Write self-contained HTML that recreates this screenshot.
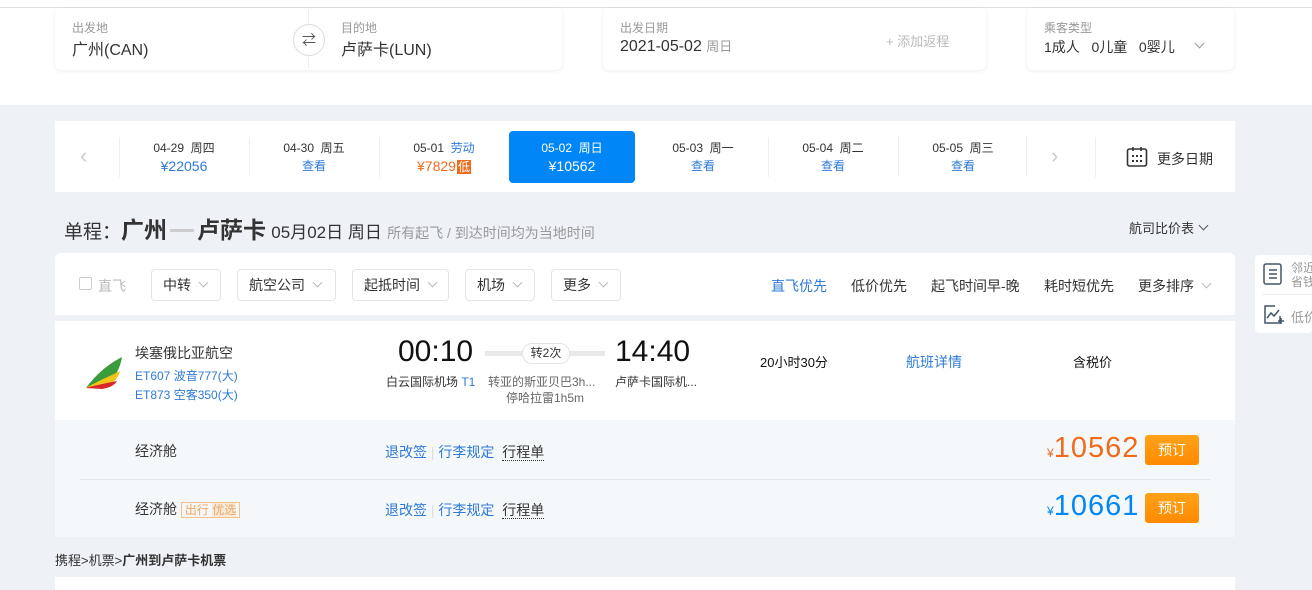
<!DOCTYPE html>
<html><head><meta charset="utf-8"><style>
*{margin:0;padding:0;box-sizing:border-box}
body{width:1312px;height:590px;overflow:hidden;background:#eef1f5;font-family:"Liberation Sans","Noto Sans CJK SC",sans-serif;color:#333;position:relative;font-size:13px}
.a{position:absolute;white-space:nowrap}
.card{position:absolute;background:#fff;border-radius:6px;box-shadow:0 1px 4px rgba(0,0,0,.08)}
.lbl{font-size:12px;color:#999}
.val{font-size:16px;color:#333}
.blue{color:#2e7ad6}
.dt{position:absolute;top:131px;width:126px;height:52px;text-align:center;font-size:12px;line-height:18px;padding-top:8px}
.sep{position:absolute;top:137px;width:1px;height:40px;background:#eee}
.fb{position:absolute;top:269px;height:32px;border:1px solid #e4e4e4;border-radius:4px;font-size:14px;line-height:30px;padding-left:11px;color:#333}
.chev{display:inline-block;width:7px;height:7px;border-right:1.5px solid #bbb;border-bottom:1.5px solid #bbb;transform:rotate(45deg);margin-left:9px;vertical-align:4px}
.btn{position:absolute;width:54px;height:30px;background:linear-gradient(#ffa31a,#ff8a00);color:#fff;font-size:14px;text-align:center;line-height:30px;border-radius:3px}
</style></head><body>
<div class="a" style="left:0;top:7px;width:1312px;height:98px;background:#fff;border-top:1px solid #e0e0e0"></div>
<div class="a" style="left:0;top:0;width:1312px;height:7px;background:#fff"></div>
<div class="card" style="left:55px;top:8px;width:507px;height:62px"></div>
<div class="a" style="left:308px;top:10px;width:1px;height:58px;background:#eee"></div>
<div class="a" style="left:293px;top:24px;width:32px;height:32px;border-radius:50%;border:1px solid #ddd;background:#fff;text-align:center;line-height:30px;font-size:14px;color:#555">⇄</div>
<div class="a lbl" style="left:72px;top:19px">出发地</div>
<div class="a val" style="left:72px;top:36px">广州(CAN)</div>
<div class="a lbl" style="left:341px;top:19px">目的地</div>
<div class="a val" style="left:341px;top:36px">卢萨卡(LUN)</div>
<div class="card" style="left:603px;top:8px;width:383px;height:62px"></div>
<div class="a lbl" style="left:620px;top:19px">出发日期</div>
<div class="a val" style="left:620px;top:36px">2021-05-02 <span style="font-size:13px;color:#999">周日</span></div>
<div class="a" style="left:886px;top:31px;color:#bbb;font-size:13px">+ 添加返程</div>
<div class="card" style="left:1027px;top:8px;width:207px;height:62px"></div>
<div class="a lbl" style="left:1044px;top:19px">乘客类型</div>
<div class="a" style="left:1044px;top:37px;font-size:14px">1成人&nbsp;&nbsp; 0儿童&nbsp;&nbsp; 0婴儿</div>
<div class="a" style="left:1196px;top:39px"><span class="chev" style="margin:0;border-color:#999"></span></div>

<div class="a" style="left:55px;top:121px;width:1180px;height:71px;background:#fff"></div>
<div class="a" style="left:80px;top:143px;font-size:22px;color:#ccc">‹</div>
<div class="sep" style="left:119px"></div>
<div class="dt" style="left:119px;width:130px">04-29&nbsp; 周四<br><span class="blue" style="font-size:14px">¥22056</span></div>
<div class="sep" style="left:249px"></div>
<div class="dt" style="left:249px;width:130px">04-30&nbsp; 周五<br><span class="blue">查看</span></div>
<div class="sep" style="left:379px"></div>
<div class="dt" style="left:379px;width:130px">05-01&nbsp; <span class="blue">劳动</span><br><span style="color:#f06a1c;font-size:14px">¥7829<span style="background:#f06a1c;color:#fff;font-size:12px;padding:0 1px;margin-left:1px">低</span></span></div>
<div class="dt" style="left:509px;background:#0086f6;color:#fff;border-radius:4px">05-02&nbsp; 周日<br><span style="font-size:14px">¥10562</span></div>
<div class="dt" style="left:638px;width:130px">05-03&nbsp; 周一<br><span class="blue">查看</span></div>
<div class="sep" style="left:768px"></div>
<div class="dt" style="left:768px;width:130px">05-04&nbsp; 周二<br><span class="blue">查看</span></div>
<div class="sep" style="left:898px"></div>
<div class="dt" style="left:898px;width:130px">05-05&nbsp; 周三<br><span class="blue">查看</span></div>
<div class="sep" style="left:1026px"></div>
<div class="a" style="left:1051px;top:143px;font-size:22px;color:#ccc">›</div>
<div class="sep" style="left:1095px"></div>
<svg class="a" style="left:1126px;top:146px" width="22" height="22" viewBox="0 0 22 22"><rect x="1.5" y="3" width="19" height="17" rx="2" fill="none" stroke="#333" stroke-width="1.6"/><path d="M7 1v4M15 1v4" stroke="#333" stroke-width="1.6"/><g fill="#333"><rect x="6" y="9" width="2" height="2"/><rect x="10" y="9" width="2" height="2"/><rect x="14" y="9" width="2" height="2"/><rect x="6" y="14" width="2" height="2"/><rect x="10" y="14" width="2" height="2"/><rect x="14" y="14" width="2" height="2"/></g></svg>
<div class="a" style="left:1157px;top:149px;font-size:14px;color:#333">更多日期</div>

<div class="a" style="left:64px;top:211px;font-size:19px;color:#333">单程：<b style="font-size:23px">广州</b><span style="display:inline-block;width:24px;height:3px;background:#ccc;margin:0 3px;vertical-align:6px"></span><b style="font-size:23px">卢萨卡</b> <span style="font-size:17px">05月02日 周日</span> <span style="font-size:14px;color:#999">所有起飞 / 到达时间均为当地时间</span></div>
<div class="a" style="left:1129px;top:218px;font-size:13px">航司比价表 <span class="chev" style="margin-left:2px;border-color:#555"></span></div>

<div class="a" style="left:55px;top:253px;width:1180px;height:62px;background:#fff;border-radius:6px 6px 0 0"></div>
<div class="a" style="left:79px;top:277px;width:13px;height:13px;border:1px solid #ccc;border-radius:2px"></div>
<div class="a" style="left:98px;top:276px;font-size:14px;color:#bbb">直飞</div>
<div class="fb" style="left:151px;width:70px">中转<span class="chev"></span></div>
<div class="fb" style="left:237px;width:99px">航空公司<span class="chev"></span></div>
<div class="fb" style="left:352px;width:97px">起抵时间<span class="chev"></span></div>
<div class="fb" style="left:465px;width:70px">机场<span class="chev"></span></div>
<div class="fb" style="left:551px;width:70px">更多<span class="chev"></span></div>
<div class="a" style="left:771px;top:276px;font-size:14px;color:#2e7ad6">直飞优先</div>
<div class="a" style="left:851px;top:276px;font-size:14px">低价优先</div>
<div class="a" style="left:931px;top:276px;font-size:14px">起飞时间早-晚</div>
<div class="a" style="left:1044px;top:276px;font-size:14px">耗时短优先</div>
<div class="a" style="left:1138px;top:276px;font-size:14px">更多排序<span class="chev"></span></div>

<div class="a" style="left:1255px;top:255px;width:57px;height:78px;background:#fff;border-radius:4px"></div>
<svg class="a" style="left:1263px;top:263px" width="20" height="22" viewBox="0 0 20 22"><rect x="1" y="1" width="17" height="20" rx="2" fill="none" stroke="#456" stroke-width="1.5"/><path d="M6 7h8M6 11h8M6 15h8" stroke="#456" stroke-width="1.5"/></svg>
<div class="a" style="left:1291px;top:261px;font-size:12px;color:#999;line-height:14px">邻近<br>省钱</div>
<div class="a" style="left:1262px;top:294px;width:50px;height:1px;background:#eee"></div>
<svg class="a" style="left:1263px;top:305px" width="22" height="20" viewBox="0 0 22 20"><path d="M12 1H2v17h15v-7" fill="none" stroke="#456" stroke-width="1.5"/><path d="M4 13l4-5 3 3 5-6" fill="none" stroke="#456" stroke-width="1.5"/><path d="M18 13v6M15 16h6" stroke="#456" stroke-width="1.5"/></svg>
<div class="a" style="left:1291px;top:307px;font-size:13px;color:#999">低价</div>

<div class="a" style="left:55px;top:321px;width:1180px;height:216px;background:#f5f8fb"></div>
<div class="a" style="left:55px;top:321px;width:1180px;height:99px;background:#fff"></div>
<svg class="a" style="left:84px;top:355px" width="40" height="36" viewBox="0 0 40 36"><path d="M2 33C10 22 22 10 38 2C36 14 30 26 18 33Z" fill="#3a9c3c"/><path d="M2 33C12 27 24 22 36 16C34 24 28 30 18 33Z" fill="#f0c419"/><path d="M2 33C12 30 24 28 33 26C31 30 25 33 18 34Z" fill="#d7262c"/></svg>
<div class="a" style="left:135px;top:343px;font-size:14px">埃塞俄比亚航空</div>
<div class="a blue" style="left:135px;top:367px;font-size:12px">ET607 波音777(大)</div>
<div class="a blue" style="left:135px;top:386px;font-size:12px">ET873 空客350(大)</div>
<div class="a" style="left:398px;top:335px;font-size:30px;color:#111">00:10</div>
<div class="a" style="left:386px;top:373px;font-size:12px">白云国际机场 <span class="blue">T1</span></div>
<div class="a" style="left:485px;top:351px;width:120px;height:5px;background:#e8e8e8"></div>
<div class="a" style="left:522px;top:343px;width:48px;height:21px;border-radius:10px;background:#fff;border:1px solid #e4e4e4;font-size:12px;text-align:center;line-height:19px">转2次</div>
<div class="a" style="left:488px;top:373px;font-size:12px;color:#666">转亚的斯亚贝巴3h...</div>
<div class="a" style="left:506px;top:389px;font-size:12px;color:#666">停哈拉雷1h5m</div>
<div class="a" style="left:615px;top:335px;font-size:30px;color:#111">14:40</div>
<div class="a" style="left:615px;top:373px;font-size:12px">卢萨卡国际机...</div>
<div class="a" style="left:760px;top:352px;font-size:13px;color:#111">20小时30分</div>
<div class="a" style="left:906px;top:352px;font-size:14px;color:#2e7ad6">航班详情</div>
<div class="a" style="left:1073px;top:352px;font-size:13px;color:#111">含税价</div>

<div class="a" style="left:135px;top:441px;font-size:14px">经济舱</div>
<div class="a" style="left:385px;top:442px;font-size:14px"><span class="blue">退改签</span> <span style="color:#ddd">|</span> <span class="blue">行李规定</span>&nbsp; <span style="border-bottom:1px dotted #333">行程单</span></div>
<div class="a" style="left:1047px;top:432px;color:#f06a1c"><span style="font-size:12px">¥</span><span style="font-size:29px;letter-spacing:1px">10562</span></div>
<div class="btn" style="left:1145px;top:435px">预订</div>
<div class="a" style="left:80px;top:479px;width:1130px;height:1px;background:#e4e4e4"></div>
<div class="a" style="left:135px;top:499px;font-size:14px">经济舱 <span style="font-size:12px;border:1px solid #f5c08a;padding:0 3px;color:#f5a55a">出行 <span style="background:#fbe9d6;color:#e8a66a">优选</span></span></div>
<div class="a" style="left:385px;top:500px;font-size:14px"><span class="blue">退改签</span> <span style="color:#ddd">|</span> <span class="blue">行李规定</span>&nbsp; <span style="border-bottom:1px dotted #333">行程单</span></div>
<div class="a" style="left:1047px;top:490px;color:#0086f6"><span style="font-size:12px">¥</span><span style="font-size:29px;letter-spacing:1px">10661</span></div>
<div class="btn" style="left:1145px;top:493px">预订</div>

<div class="a" style="left:55px;top:550px;font-size:13px;color:#333">携程&gt;机票&gt;<b>广州到卢萨卡机票</b></div>
<div class="a" style="left:55px;top:577px;width:1180px;height:13px;background:#fff"></div>
</body></html>
